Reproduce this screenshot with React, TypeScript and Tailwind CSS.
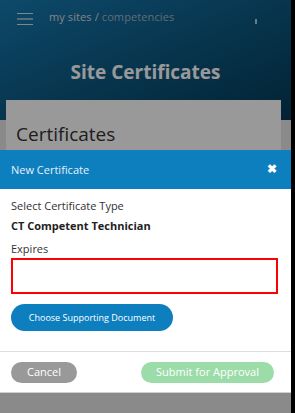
import React from "react";

const font = { fontFamily: "'Open Sans', 'Liberation Sans', sans-serif" };

const Header = () => (
  <div className="h-[120px] bg-gradient-to-br from-[#177bb1] to-[#053a57] relative">
    <div className="flex items-center h-[38px] pl-[17px] pr-[34px]">
      {/* hamburger */}
      <div className="flex flex-col gap-[4px] w-[16px]">
        <span className="h-[1px] bg-white/80" />
        <span className="h-[2px] bg-white/50" />
        <span className="h-[1px] bg-white/80" />
      </div>
      <div className="ml-[16px] text-[11px] -mt-[4px] tracking-[0.1px]">
        <span className="text-[#dddddd]">my sites / </span>
        <span className="text-[#9fb4c4]">competencies</span>
      </div>
      <span className="ml-auto w-[2px] h-[5px] bg-white/70 mt-[4px]" />
    </div>
    <h1 className="text-center text-white font-bold text-[19px] mt-[20px]">Site Certificates</h1>
  </div>
);

export default function App() {
  return (
    <div className="flex w-[295px] h-[413px] overflow-hidden" style={font}>
      <div className="relative flex-1 bg-[#e6e6e6]">
        <Header />
        <div className="absolute top-[100px] left-[6px] w-[275px] h-[200px] bg-white pl-[10px] pt-[25px]">
          <h2 className="text-[19px] text-[#333] leading-none">Certificates</h2>
        </div>
        {/* overlay */}
        <div className="absolute inset-0 bg-black/40" />

        {/* modal */}
        <div className="absolute left-0 right-0 top-[150px] bg-white">
          <div className="h-[39px] bg-[#0d7fbf] flex items-center justify-between pl-[11px] pr-[14px]">
            <span className="text-[11px] text-[#e6f0f8] mt-[2px]">New Certificate</span>
            <span className="text-white font-bold text-[12px] leading-none -mt-[2px]">✖</span>
          </div>
          <div className="px-[11px] pt-[9px] pb-[20px]">
            <p className="text-[11px] text-[#333] leading-[16px]">Select Certificate Type</p>
            <p className="text-[11px] text-[#222] font-bold leading-[16px] mt-[4px]">CT Competent Technician</p>
            <p className="text-[11px] text-[#333] leading-[16px] mt-[7px]">Expires</p>
            <div className="h-[36px] mt-[1px] border-[2.5px] border-[#ff0000] w-[267px]" />
            <button className="mt-[10px] h-[27px] w-[162px] rounded-full bg-[#0d7fbf] text-white text-[9px]">
              Choose Supporting Document
            </button>
          </div>
          <div className="border-t border-[#dddddd] flex items-center justify-between px-[11px] h-[42px] border-b border-b-[#cfcfcf]">
            <button className="h-[21px] w-[66px] rounded-full bg-[#999999] text-white text-[11px]">Cancel</button>
            <button className="h-[21px] w-[133px] rounded-full bg-[#9bdca8] text-white text-[11px] mr-[6px]">
              Submit for Approval
            </button>
          </div>
        </div>
      </div>
      <div className="w-[4px] bg-black" />
    </div>
  );
}
